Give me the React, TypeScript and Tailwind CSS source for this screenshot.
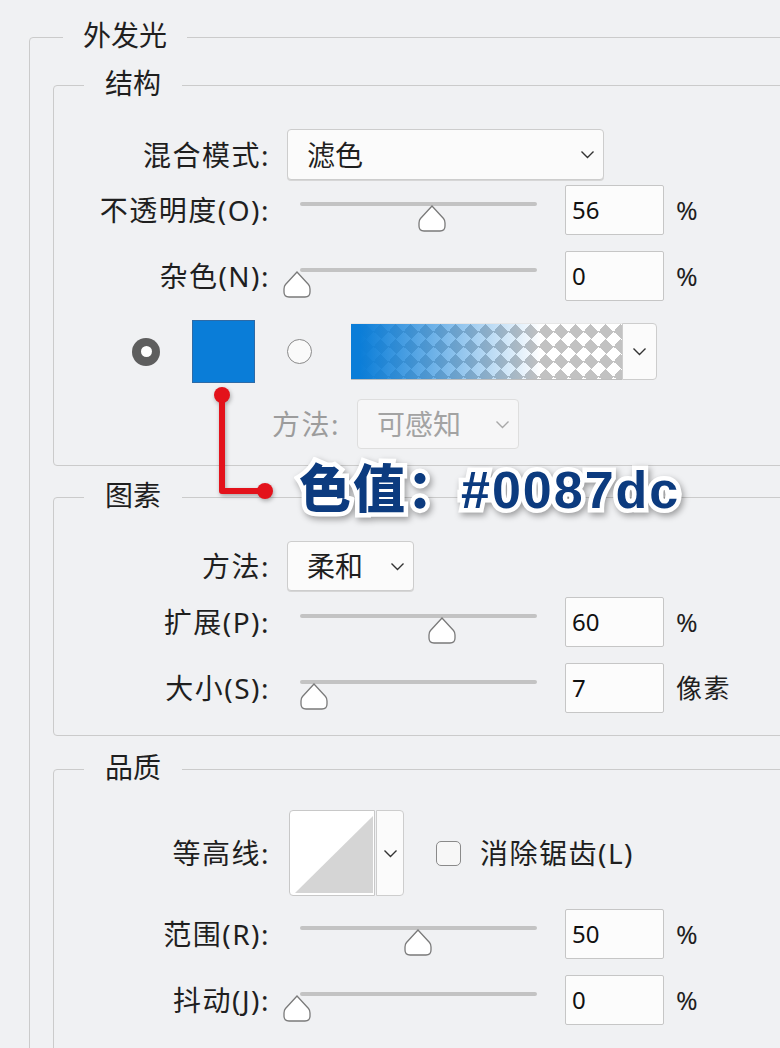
import type { ReactNode } from 'react';

const Chevron = ({ className = '' }: { className?: string }) => (
  <svg width="15" height="9" viewBox="0 0 15 9" className={className}>
    <path d="M1.5 1.5l6 6 6-6" fill="none" stroke="currentColor" strokeWidth="1.4" />
  </svg>
);

const Thumb = ({ value }: { value: number }) => (
  <svg
    width="28"
    height="27"
    viewBox="0 0 28 27"
    className="absolute top-[20px]"
    style={{ left: 12 + value * 2.41 - 14 }}
  >
    <path
      d="M14 1 L2.5 13.5 Q1 15.3 1 18 V21 Q1 26 6 26 H22 Q27 26 27 21 V18 Q27 15.3 25.5 13.5 Z"
      fill="#fff"
      stroke="#7a7a7a"
      strokeWidth="1.3"
    />
  </svg>
);

const Slider = ({ value }: { value: number }) => (
  <div className="relative ml-[15px] h-full w-[265px] shrink-0">
    <div className="ml-[15px] mt-[17px] h-[4px] w-[237px] rounded-full bg-[#c3c3c3]" />
    <Thumb value={value} />
  </div>
);

const NumberBox = ({ value }: { value: string }) => (
  <div className="ml-[15px] flex h-full w-[99px] shrink-0 items-center rounded-[2px] border border-[#c6c6c6] bg-[#fcfcfc] pl-[6px] text-[24px] tracking-normal text-[#111]">
    {value}
  </div>
);

const Label = ({ children }: { children: ReactNode }) => (
  <div className="w-[216px] shrink-0 whitespace-nowrap text-right">{children}</div>
);

const SliderRow = ({
  label,
  value,
  unit = '%',
  className = '',
}: {
  label: string;
  value: number;
  unit?: string;
  className?: string;
}) => (
  <div className={`flex h-[50px] items-center ${className}`}>
    <Label>{label}</Label>
    <Slider value={value} />
    <NumberBox value={String(value)} />
    <span className="ml-[12px] text-[26px]">{unit}</span>
  </div>
);

const Select = ({
  value,
  className = '',
  disabled = false,
}: {
  value: string;
  className?: string;
  disabled?: boolean;
}) => (
  <div
    className={`flex h-full shrink-0 items-center justify-between rounded-[4px] border pl-[19px] pr-[8px] tracking-normal ${
      disabled
        ? 'border-[#dedede] bg-[#f6f6f7] text-[#a3a3a3]'
        : 'border-[#cdcdcd] bg-[#fbfbfb] text-[#1f1f1f] shadow-[0_1px_0_#d6d6d6]'
    } ${className}`}
  >
    <span>{value}</span>
    <Chevron className={disabled ? 'text-[#a8a8a8]' : 'text-[#333]'} />
  </div>
);

const Legend = ({ children }: { children: ReactNode }) => (
  <legend className="ml-[30px] px-[21px] pb-[4px] text-[28px] leading-[32px] tracking-normal">
    {children}
  </legend>
);

const Annotation = () => (
  <>
    <svg
      width="70"
      height="116"
      viewBox="0 0 70 116"
      className="absolute left-[210px] top-[385px] [filter:drop-shadow(1px_2px_2px_rgba(0,0,0,0.3))]"
    >
      <path d="M12 10 V106 H55" fill="none" stroke="#e3121b" strokeWidth="6" strokeLinejoin="round" />
      <circle cx="12" cy="10" r="8" fill="#e3121b" />
      <circle cx="55" cy="106" r="8" fill="#e3121b" />
    </svg>
    <div className="absolute left-[299px] top-[458px] whitespace-nowrap font-['Liberation_Sans','Noto_Sans_CJK_SC',sans-serif] text-[52px] font-black leading-[64px] tracking-[2px] text-[#0c3b7f] [-webkit-text-stroke:9px_#fff] [paint-order:stroke_fill] [filter:drop-shadow(2px_3px_3px_rgba(0,0,0,0.35))]">
      色值：#0087dc
    </div>
  </>
);

const App = () => {
  return (
    <div className="relative h-[1048px] w-[780px] overflow-hidden bg-[#f0f1f3] pl-[29px] pt-[19px] font-['Noto_Sans','Noto_Sans_CJK_SC',sans-serif] text-[28px] tracking-[1.5px] text-[#1f1f1f]">
      <fieldset className="w-[800px] rounded-[4px] border border-[#cbcbcb] pb-[40px]">
        <legend className="ml-[33px] px-[20px] pb-[4px] text-[28px] leading-[32px] tracking-normal">
          外发光
        </legend>

        {/* 结构 */}
        <fieldset className="ml-[23px] mt-[12px] w-[760px] rounded-[4px] border border-[#cbcbcb] pb-[16px]">
          <Legend>结构</Legend>

          <div className="mt-[26px] flex h-[51px] items-center">
            <Label>混合模式:</Label>
            <Select value="滤色" className="ml-[17px] w-[317px]" />
          </div>

          <SliderRow label="不透明度(O):" value={56} className="mt-[5px]" />
          <SliderRow label="杂色(N):" value={0} className="mt-[16px]" />

          <div className="mt-[19px] flex h-[63px] items-center pl-[78px]">
            <div className="flex size-[28px] items-center justify-center rounded-full bg-[#5e5e5e]">
              <div className="size-[11px] rounded-full bg-white" />
            </div>
            <div className="ml-[32px] size-[63px] border border-[#2e6aa6] bg-[#0a7dd8]" />
            <div className="ml-[32px] size-[25px] rounded-full border border-[#8a8a8a] bg-[#fafafa]" />
            <div className="ml-[39px] h-[57px] w-[271px] border-b border-t border-b-[#bdbdbd] border-t-[#e6e6e6] bg-[linear-gradient(to_right,#0a7dd8_3%,rgba(10,125,216,0.6)_30%,rgba(10,125,216,0)_70%),repeating-conic-gradient(from_45deg,#c2c2c2_0%_25%,#ffffff_0%_50%)] bg-[length:100%_100%,15px_15px]" />
            <div className="flex h-[57px] w-[35px] items-center justify-center rounded-r-[4px] border border-[#cdcdcd] bg-[#fbfbfb]">
              <Chevron className="text-[#333]" />
            </div>
          </div>

          <div className="mt-[16px] flex h-[50px] items-center pl-[218px]">
            <span className="text-[#9c9c9c]">方法:</span>
            <Select value="可感知" disabled className="ml-[17px] w-[162px]" />
          </div>
        </fieldset>

        {/* 图素 */}
        <fieldset className="ml-[23px] mt-[13px] w-[760px] rounded-[4px] border border-[#cbcbcb] pb-[22px]">
          <Legend>图素</Legend>

          <div className="mt-[26px] flex h-[50px] items-center">
            <Label>方法:</Label>
            <Select value="柔和" className="ml-[17px] w-[127px]" />
          </div>

          <SliderRow label="扩展(P):" value={60} className="mt-[6px]" />
          <SliderRow label="大小(S):" value={7} unit="像素" className="mt-[16px]" />
        </fieldset>

        {/* 品质 */}
        <fieldset className="ml-[23px] mt-[15px] w-[760px] rounded-[4px] border border-[#cbcbcb] pb-[40px]">
          <Legend>品质</Legend>

          <div className="mt-[23px] flex h-[86px] items-center">
            <Label>等高线:</Label>
            <div className="ml-[19px] flex h-full">
              <div className="h-[86px] w-[86px] rounded-l-[4px] border border-[#c8c8c8] bg-white">
                <svg width="84" height="84" viewBox="0 0 84 84">
                  <polygon points="5,82 83,5 83,82" fill="#d5d5d5" />
                </svg>
              </div>
              <div className="ml-px flex h-[86px] w-[28px] items-center justify-center rounded-r-[4px] border border-[#cdcdcd] bg-[#fbfbfb]">
                <Chevron className="text-[#333]" />
              </div>
            </div>
            <div className="ml-[32px] size-[25px] rounded-[5px] border border-[#8a8a8a] bg-[#f7f7f7]" />
            <span className="ml-[19px]">消除锯齿(L)</span>
          </div>

          <SliderRow label="范围(R):" value={50} className="mt-[13px]" />
          <SliderRow label="抖动(J):" value={0} className="mt-[16px]" />
        </fieldset>
      </fieldset>

      <Annotation />
    </div>
  );
};

export default App;
